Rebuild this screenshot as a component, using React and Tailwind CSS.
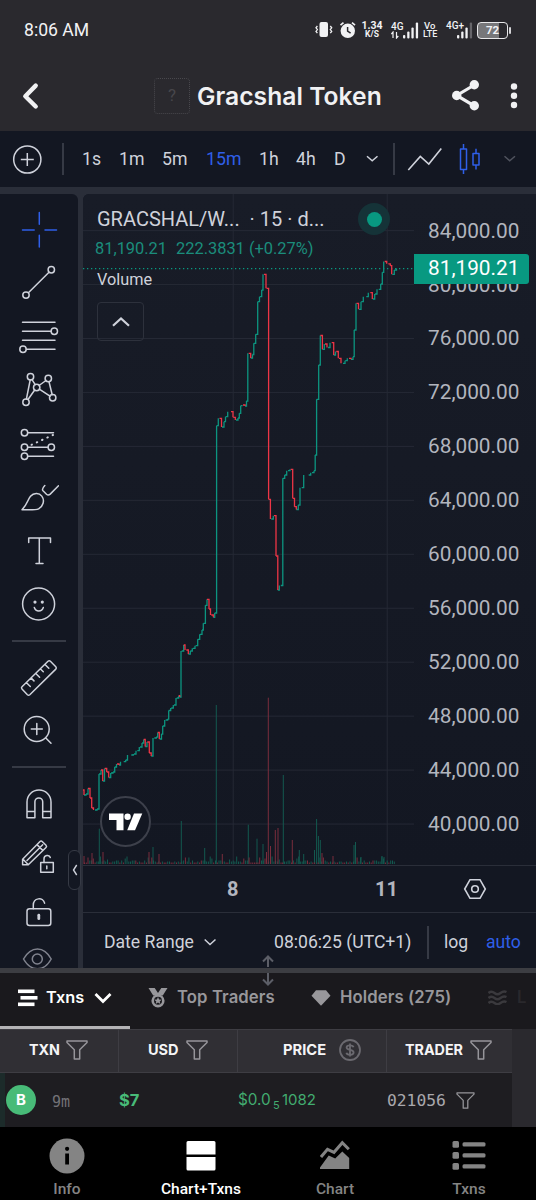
const PRICES = [
    "84,000.00",
    "80,000.00",
    "76,000.00",
    "72,000.00",
    "68,000.00",
    "64,000.00",
    "60,000.00",
    "56,000.00",
    "52,000.00",
    "48,000.00",
    "44,000.00",
    "40,000.00",
];

// x, y pairs of the price steps
const STEPS = [
    [83, 790], [84, 795], [86, 794], [88, 788.5], [90, 798], [91.7, 808], [93.5, 810], [97, 809],
    [99, 774], [101, 770], [102.7, 781], [104.5, 768.5], [106.7, 772], [108.7, 777.5], [110.7, 773],
    [113, 772], [114.7, 767], [116.5, 764], [119, 765], [120.5, 761.7], [125.7, 760], [127.5, 755],
    [133.3, 754], [136, 750.7], [139.3, 747], [142, 743], [143.7, 739.5], [145.2, 746.5], [147, 742],
    [149.3, 753], [151.2, 756], [153, 738], [156.3, 737], [157.7, 732.5], [159.3, 739], [161.5, 734],
    [162.7, 726], [164.7, 720], [167.7, 719], [168.7, 710.5], [170.7, 708], [173.3, 705], [176, 698],
    [178.7, 695.7], [179.7, 697], [181, 651], [183.7, 645], [185, 650], [188.3, 654], [190.3, 651],
    [192.3, 648.3], [195, 645.7], [197.7, 639.3], [199.7, 634.3], [202, 630], [203.3, 623.3],
    [205.4, 605.3], [207, 599.3], [209, 609], [210.5, 615], [213.3, 617.3], [214.7, 613],
    [216.6, 425.7], [218.3, 418.3], [221.5, 427], [224, 421.7], [225.5, 416.7], [227.7, 411.7],
    [233, 417.3], [235.3, 420], [238, 418], [239.3, 413.3], [240.7, 405.7], [242, 405], [245, 406],
    [246.5, 401], [247.8, 353.3], [250.7, 358], [252.5, 354.5], [253.8, 343.3], [255.7, 334.3],
    [257.7, 301.7], [259.5, 296.7], [261.7, 290], [263, 274.3], [266, 288.3], [268.6, 499.3],
    [270.4, 519], [273.3, 515.7], [276, 556], [277.8, 590], [279.3, 585.5], [282.8, 478.3],
    [284.7, 475], [286.7, 470.7], [290, 469.3], [292.7, 498.3], [294.5, 506.7], [296.3, 509.5],
    [298.3, 505], [300, 487.7], [303.7, 475], [310.7, 472.7], [314, 470.7], [315.2, 455],
    [316.6, 399.3], [318.7, 365], [320.3, 335.5], [322.4, 349.3], [324.3, 344], [327, 347.5],
    [330, 342.7], [333.7, 355], [335.5, 351.5], [338.3, 358.3], [341, 363.3], [345, 360.7],
    [347.3, 358.3], [351, 359.3], [353, 356.7], [354.2, 330], [356, 303.3], [358.5, 309.3],
    [361, 301.7], [363.3, 296.7], [368.3, 292.7], [372.3, 299], [374.7, 294], [377, 289.3],
    [380.7, 284], [382.3, 272.3], [383.7, 261.5], [386.7, 263.8], [390.3, 265.7], [391.7, 274.3],
    [394.3, 270], [396.5, 268.5],
];

// x, top, falling
const VOLUME_PEAKS = [
    [84, 856, 1], [92, 853, 1], [99.3, 828.7, 0], [103, 852, 1], [149, 852, 1], [153, 847, 0],
    [159, 854, 1], [181.3, 821, 0], [204.7, 848, 0], [216.3, 705, 0], [222.3, 854, 1],
    [248.3, 824.7, 0], [257, 838.7, 0], [263, 844, 0], [266.5, 852, 1], [268.3, 697.7, 1],
    [270.5, 846, 1], [275.3, 830, 1], [278, 828, 1], [283.3, 775, 0], [292.3, 840, 1],
    [299.3, 850, 0], [303.7, 854, 0], [314.5, 850, 0], [316.6, 819, 0], [318.4, 836, 0],
    [320.3, 840, 0], [322, 853, 1], [333, 856, 1], [354, 845, 0], [355.5, 842, 0], [361, 857, 0],
    [382, 856, 0], [384, 857, 0],
];

const GRID_Y = PRICES.map((_, i) => 230.6 + i * 53.95);

function stepPath(falling) {
    let d = "";
    for (let i = 1; i < STEPS.length; i++) {
        const [x0, y0] = STEPS[i - 1];
        const [x1, y1] = STEPS[i];
        if (y1 > y0 === falling) {
            d += `M${Math.max(x0, x1 - 2)} ${y0}H${x1}V${y1}`;
        }
    }
    return d;
}

function volumePath(falling) {
    let d = "";
    VOLUME_PEAKS.forEach(([x, top, down]) => {
        if (Boolean(down) === falling) {
            d += `M${x} 864V${top}`;
        }
    });
    for (let i = 0; i < 176; i++) {
        const seed = (i * 7919 + 31 * i * i) % 97;
        const down = seed % 3 === 0;
        if (down === falling) {
            const height = 1.5 + (seed % 11 > 6 ? seed % 7 : seed % 3);
            d += `M${(84.5 + i * 1.77).toFixed(1)} 864v${-height}`;
        }
    }
    return d;
}

function Glyph({ box, className = "", children }) {
    const [, , w, h] = box.split(" ");
    return (
        <svg
            viewBox={box}
            width={w}
            height={h}
            fill="none"
            stroke="currentColor"
            className={`shrink-0 ${className}`}
        >
            {children}
        </svg>
    );
}

function SignalBars({ faded }) {
    return (
        <svg width="16" height="17" viewBox="0 0 16 17" fill="currentColor">
            <rect x="0" y="13" width="2.3" height="3.5" rx="1" />
            <rect x="4.2" y="9.5" width="2.3" height="7" rx="1" />
            <rect x="8.4" y="5.5" width="2.3" height="11" rx="1" />
            <rect x="12.8" y="0.5" width="2.3" height="16" rx="1" opacity={faded ? 0.3 : 1} />
        </svg>
    );
}

function PhoneStatus() {
    return (
        <div className="flex h-[60px] items-center pl-6 text-[#f2f2f4]">
            <span className="w-[289px] text-[17.6px]">8:06 AM</span>
            <svg width="42" height="18" viewBox="0 0 42 18" fill="currentColor" className="ml-px">
                <rect x="5.5" y="1" width="8.5" height="15" rx="2" />
                <path
                    d="M3.4 5L2 6.8l1.4 1.8L2 10.4l1.4 1.8M16.3 5l1.4 1.8-1.4 1.8 1.4 1.8-1.4 1.8"
                    fill="none"
                    stroke="currentColor"
                    strokeWidth="1.3"
                />
                <circle cx="33.8" cy="9.8" r="7.2" />
                <path d="M26.5 4.2l3-2.6M41 4.2l-3-2.6" stroke="currentColor" strokeWidth="1.7" />
                <path d="M33.6 6v4.2l3 2" fill="none" stroke="#2a292e" strokeWidth="1.5" />
            </svg>
            <div className="ml-[6px] w-5 text-center leading-[9px] font-bold">
                <div className="-mx-1 text-[10.5px]">1.34</div>
                <div className="text-[8.5px]">K/S</div>
            </div>
            <div className="ml-[9px] w-[12px] text-[10px] leading-[9px] font-medium">
                <div>4G</div>
                <svg width="8" height="8" viewBox="0 0 8 8" fill="none" stroke="currentColor" strokeWidth="1.2">
                    <path d="M2 7V1L.3 3M5.500 1v6L7.300 5" />
                </svg>
            </div>
            <SignalBars />
            <div className="ml-[5px] w-[16px] text-[9.5px] leading-[9px] font-medium">
                <div>Vo</div>
                <div className="-ml-px text-[9px]">LTE</div>
            </div>
            <div className="ml-[6px] h-[18px] w-[11px] text-[10px] leading-[9px] font-medium whitespace-nowrap">
                4G+
            </div>
            <SignalBars faded />
            <div className="ml-[4px] flex h-[17px] w-[31px] rounded-[4px] border-[1.5px] border-[#e8e8ea] bg-linear-to-r from-[#77777a] from-72% to-[#2a292e] to-72% text-[11.5px] leading-[14px] font-bold">
                <span className="w-full text-center">72</span>
            </div>
            <div className="ml-px h-[7px] w-[2px] rounded bg-[#d5d5d8]" />
        </div>
    );
}

function Header() {
    return (
        <header className="h-[131px] bg-[#2a292e]">
            <PhoneStatus />
            <div className="flex h-[72px] items-center pl-5 text-[#f1f1f3]">
                <Glyph box="20 80 20 32">
                    <path d="M35.700 85.600L25.300 96.200l10.400 10.300" strokeWidth="4.400" strokeLinecap="round" strokeLinejoin="round" />
                </Glyph>
                <div className="ml-[114px] flex size-9 shrink-0 items-center justify-center rounded-sm border border-dotted border-[#49484d] text-[17px] text-[#47464b]">
                    ?
                </div>
                <h1 className="ml-[7px] w-[186px] shrink-0 font-[Inter] text-[24.600px] font-semibold tracking-[0.050px] whitespace-nowrap">
                    Gracshal Token
                </h1>
                <Glyph box="450 78 32 36" className="ml-[67px]">
                    <path d="M474.300 85L456.700 95.500l17.600 10.300" strokeWidth="3.200" />
                    <g fill="currentColor" strokeWidth="0">
                        <circle cx="474.300" cy="84.800" r="4.700" />
                        <circle cx="456.700" cy="95.500" r="4.700" />
                        <circle cx="474.300" cy="105.800" r="4.700" />
                    </g>
                </Glyph>
                <Glyph box="506 78 16 36" className="ml-[24px]">
                    <g fill="currentColor" strokeWidth="0">
                        <circle cx="514" cy="86.500" r="3.200" />
                        <circle cx="514" cy="95.800" r="3.200" />
                        <circle cx="514" cy="105" r="3.200" />
                    </g>
                </Glyph>
            </div>
        </header>
    );
}

const INTERVALS = [
    { label: "1s", className: "w-[37px]" },
    { label: "1m", className: "w-[43px]" },
    { label: "5m", className: "w-[44px]" },
    { label: "15m", className: "w-[53px] text-[#2f5fe8]" },
    { label: "1h", className: "w-[37px]" },
    { label: "4h", className: "w-[38px]" },
    { label: "D", className: "w-[30px]" },
];

function Toolbar() {
    return (
        <div className="flex h-14 items-center bg-[#131722] text-[17.700px] text-[#cfd2db]">
            <Glyph box="12 143.500 32 32" className="ml-3">
                <circle cx="27.300" cy="160" r="13.600" strokeWidth="1.500" />
                <path d="M20.800 160h13M27.300 153.500v13" strokeWidth="1.500" />
            </Glyph>
            <div className="ml-[18px] h-8 w-[2px] bg-[#363a45]" />
            <div className="ml-[18px] flex">
                {INTERVALS.map(({ label, className }) => (
                    <span key={label} className={`shrink-0 ${className}`}>
                        {label}
                    </span>
                ))}
            </div>
            <Glyph box="364 150 16 20">
                <path d="M367 157.300l5.200 4.500 5.300-4.500" strokeWidth="1.500" />
            </Glyph>
            <div className="ml-[13px] h-8 w-[2px] bg-[#363a45]" />
            <Glyph box="406 144 40 32" className="ml-[10px]">
                <path d="M409.300 171l12-13.500 8.500 7.500 12.500-15.500" strokeWidth="1.600" />
            </Glyph>
            <Glyph box="446 144 40 32" className="text-[#2f5fe8]">
                <path
                    d="M461.500 150h6v20.500h-6zM464.500 145v5M464.500 170.500v4.500M474 154.500h6V166h-6zM477 149.700v4.800M477 166v4.500"
                    strokeWidth="1.500"
                    strokeLinejoin="round"
                />
            </Glyph>
            <Glyph box="500 150 20 20" className="ml-[14px] text-[#50535e]">
                <path d="M505.500 157.300l5.200 4.500 5.300-4.500" strokeWidth="1.500" />
            </Glyph>
        </div>
    );
}

function Tool({ y, children }) {
    return (
        <div className="flex h-[53.500px] shrink-0 items-center justify-center">
            <Glyph box={`19 ${y - 20} 40 40`}>
                <g strokeWidth="1.500" strokeLinejoin="round" strokeLinecap="round">
                    {children}
                </g>
            </Glyph>
        </div>
    );
}

function Divider({ className }) {
    return <div className={`ml-3 h-[2px] w-[54px] shrink-0 bg-[#363a45] ${className}`} />;
}

function DrawingTools() {
    return (
        <aside className="flex w-[78px] shrink-0 flex-col overflow-hidden rounded-tr-md bg-[#131722] pt-[9px] text-[#cfd2db]">
            <Tool y={230}>
                <path d="M39.300 212.500v11.800M39.300 235.200V247M22.500 230h11.700M45 230h11.500" stroke="#2f5fe8" />
            </Tool>
            <Tool y={283.500}>
                <path d="M28.400 293.200L49 272.700" />
                <circle cx="51.300" cy="270.300" r="3.200" />
                <circle cx="26" cy="295.600" r="3.200" />
            </Tool>
            <Tool y={337}>
                <path d="M22.500 322.300H55M22.500 331.300H51M22.500 340.300H55M26.500 349.300H55" />
                <circle cx="54.300" cy="331.300" r="3.200" />
                <circle cx="23" cy="349.300" r="3.200" />
            </Tool>
            <Tool y={390.500}>
                <path d="M30.200 380.500L26.400 399.500M32 380.200l3.200 5M34.700 390.500l-6.700 9.500M39 386l7-5M49 382.200l3.200 13M39.300 389.700l10.700 7" />
                <circle cx="30.500" cy="377.300" r="3.200" />
                <circle cx="48.300" cy="379" r="3.200" />
                <circle cx="36.700" cy="388" r="3.200" />
                <circle cx="26" cy="402.700" r="3.200" />
                <circle cx="52.700" cy="398.300" r="3.200" />
            </Tool>
            <Tool y={444}>
                <path d="M28 432.700h25.500M28 447.300h20M28 456.300h25.500" />
                <path d="M31.500 444.800L53 435" strokeDasharray="0.500 5.300" strokeWidth="2" />
                <circle cx="24.500" cy="432.700" r="3.200" />
                <circle cx="24.500" cy="447.300" r="3.200" />
                <circle cx="51.300" cy="447.300" r="3.200" />
                <circle cx="24.500" cy="456.300" r="3.200" />
            </Tool>
            <Tool y={497.500}>
                <path d="M22 510.300c6-6.500 5.500-10 8.500-13.500s8.500-4 11.300-.2c3.300 4.400 1.200 10.400-3.200 12.700-3 1.500-8 1-16.600 1z" />
                <path d="M44.800 486c-2.500 2.700-3 4-1.800 5.300l3.500 3.400c1.300 1.200 2.500 1 3.700-.1l8.300-8.400" />
            </Tool>
            <Tool y={551}>
                <path d="M28.700 542.500V538h21.800v4.500M39.300 538v25.600M36 563.600h7" />
            </Tool>
            <Tool y={604.500}>
                <circle cx="38.600" cy="604.500" r="16" />
                <path d="M34.300 608c1.500 4.600 7.500 4.600 9 0" />
                <circle cx="35" cy="602.600" r="1.600" fill="currentColor" strokeWidth="0" />
                <circle cx="42.300" cy="602.600" r="1.600" fill="currentColor" strokeWidth="0" />
            </Tool>
            <Divider className="mt-[9px] mb-[9px]" />
            <Tool y={677.500}>
                <path d="M22 686.300l26-25.500c.8-.7 1.700-.7 2.400 0l5.400 5.500c.7.800.7 1.600 0 2.300l-26 25.600c-.8.700-1.600.7-2.400 0L22 688.600c-.7-.8-.7-1.600 0-2.300zM26.500 682.200l3.800 3.800M31.200 677.600l2.800 2.800M35.800 673l3.800 3.800M40.500 668.500l2.800 2.800M45 664l3.800 3.800" />
            </Tool>
            <Tool y={731}>
                <circle cx="36.700" cy="729" r="12.500" />
                <path d="M31.300 729h11M36.800 723.500v11M45.800 738l5.200 5.300" />
            </Tool>
            <Divider className="mt-[8px] mb-[9px]" />
            <Tool y={803.500}>
                <path d="M27 817.300V801.500a12 12 0 0 1 24 0v15.800h-8.300v-16a3.900 3.900 0 0 0-7.800 0v16zM27 811h7.900M42.700 811H51" />
            </Tool>
            <Tool y={857}>
                <path d="M22.600 864.700v-5.500L40 841.500c.7-.7 1.500-.7 2.200 0l3.800 3.800c.7.700.7 1.500 0 2.200L28.300 864.700zM22.800 859l5.300 5.500M27 860.500l15.700-15.700M37 844.600l5.700 5.800" />
                <path d="M40.700 862.500h12.600v9.700H40.700z" fill="#131722" />
                <path d="M44 862.500v-3.700c0-4 5.500-4.500 6.300-1.300M46.800 866v2.700" />
            </Tool>
            <Tool y={911}>
                <rect x="27" y="908.700" width="23.800" height="16.800" rx="2.500" />
                <path d="M33.300 908.700v-3.500c0-7.600 9.800-8.600 11.300-2" />
                <path d="M38.800 915.200v3.500" strokeWidth="2.800" />
            </Tool>
            <Glyph box="19 944 40 24" className="mt-[6px] ml-[19px] text-[#80838e]">
                <path d="M23.500 959C31 945.500 44 945.500 51.200 959 44 972 31 972 23.500 959z" strokeWidth="1.500" />
                <circle cx="37.300" cy="959" r="5" strokeWidth="1.500" />
            </Glyph>
        </aside>
    );
}

function PriceChart() {
    return (
        <svg width="331" height="671" viewBox="83 194 331 671" fill="none" className="block">
            <g stroke="#252935">
                {GRID_Y.map((y) => (
                    <path key={y} d={`M83 ${y}H414`} />
                ))}
                <path d="M233.200 194V865M387.200 194V865" />
            </g>
            <path d={volumePath(false)} stroke="#13594f" strokeWidth="1" />
            <path d={volumePath(true)} stroke="#7a2d3d" strokeWidth="1" />
            <path d="M83 268.700H414" stroke="#089981" strokeWidth="1.300" strokeDasharray="1.300 2.700" />
            <path d={stepPath(false)} stroke="#0c9580" strokeWidth="1.300" />
            <path d={stepPath(true)} stroke="#ee3546" strokeWidth="1.300" />
        </svg>
    );
}

function Legend() {
    return (
        <div className="absolute top-0 left-0 w-[331px] pt-3 pl-[14px] text-[#cfd2db]">
            <div className="flex h-[26px] items-center text-[20px] whitespace-nowrap">
                <span className="w-[232px]">GRACSHAL/W... &nbsp;· 15 · d...</span>
                <span className="ml-[29px] flex size-8 items-center justify-center rounded-full bg-[#153338]">
                    <span className="size-[15px] rounded-full bg-[#089981]" />
                </span>
            </div>
            <div className="mt-[7px] -ml-[2px] flex h-5 items-center gap-[9px] text-[16.400px] whitespace-nowrap text-[#1b8d7c]">
                <span>81,190.21</span>
                <span>222.3831 (+0.27%)</span>
            </div>
            <div className="mt-[11px] text-[16.300px] leading-5">Volume</div>
            <div className="mt-[12px] flex h-[39px] w-[47px] items-center justify-center rounded-[4px] border-[1.500px] border-[#2d313c]">
                <Glyph box="0 0 20 12">
                    <path d="M2 9.700l8-7.200 8 7.200" strokeWidth="2.200" />
                </Glyph>
            </div>
        </div>
    );
}

function PriceAxis() {
    return (
        <div className="relative flex-1 overflow-hidden pt-[9.600px] text-[20.800px] text-[#b2b5be]">
            {PRICES.map((price) => (
                <div key={price} className="h-[53.950px] pl-[14px] leading-[54px]">
                    {price}
                </div>
            ))}
            <div className="absolute top-[60px] left-0 h-[30px] w-[115px] rounded-r-[3px] bg-[#089981] pl-[14px] leading-[29px] text-white">
                81,190.21
            </div>
        </div>
    );
}

function TradingViewBadge() {
    return (
        <div className="absolute top-[602px] left-[17px] flex size-[51px] items-center justify-center rounded-full border-2 border-[#3d404b] bg-[#131722]">
            <svg width="34" height="18" viewBox="0 0 34 18" fill="#fff">
                <path d="M0 .5h14.500v16.800H7.500V7H0z" />
                <circle cx="18.600" cy="3.700" r="3.200" />
                <path d="M25 .5h8.300l-7.300 16.800h-7.800z" />
            </svg>
        </div>
    );
}

function ChartPanel() {
    return (
        <section className="flex w-[453px] flex-col overflow-hidden rounded-tl-md bg-[#131722]">
            <div className="relative flex h-[671px] bg-linear-to-b from-[#181c27] to-[#131722]">
                <PriceChart />
                <PriceAxis />
                <Legend />
                <TradingViewBadge />
            </div>
            <div className="flex h-[48px] shrink-0 items-center border-y border-[#2a2e39] text-[20px] font-bold text-[#b2b5be]">
                <span className="ml-[144px] w-[148px]">8</span>
                <span className="w-[87px]">11</span>
                <Glyph box="0 0 24 22" className="ml-px text-[#cfd2db]">
                    <path d="M1.700 11L7 1.700h10L22.300 11 17 20.300H7z" strokeWidth="1.600" />
                    <circle cx="12" cy="11" r="3.300" strokeWidth="1.600" />
                </Glyph>
            </div>
            <div className="flex h-[55px] shrink-0 items-center pt-[3px] pl-[21px] text-[17.600px] whitespace-nowrap text-[#cfd2db]">
                <span className="w-[98px]">Date Range</span>
                <Glyph box="0 0 16 10">
                    <path d="M2.700 2.500L8 7.500l5.500-5" strokeWidth="1.500" />
                </Glyph>
                <span className="ml-[56px] w-[153px]">08:06:25 (UTC+1)</span>
                <div className="h-[33px] w-[2px] bg-[#363a45]" />
                <span className="ml-[15px] w-[42px]">log</span>
                <span className="text-[#2f5fe8]">auto</span>
            </div>
        </section>
    );
}

function Workspace() {
    return (
        <main className="relative flex h-[781px] justify-between bg-[#2a2e39] pt-[7px]">
            <DrawingTools />
            <ChartPanel />
            <div className="absolute top-[663px] left-[68px] flex h-10 w-[13px] items-center justify-center rounded-md border border-[#363a45] bg-[#131722] text-[#cfd2db]">
                <Glyph box="0 0 6 12">
                    <path d="M4.700 1L1.500 6l3.200 5" strokeWidth="1.400" />
                </Glyph>
            </div>
        </main>
    );
}

function Splitter() {
    return (
        <div className="relative h-[5px] bg-[#3c3d42]">
            <svg
                width="14"
                height="32"
                viewBox="0 0 14 32"
                fill="none"
                stroke="#5c5e67"
                strokeWidth="2"
                className="absolute -top-[13px] left-[261px]"
            >
                <path d="M7 12V1.500M2 6.500l5-5 5 5M7 18v11.500M2 24.500l5 5 5-5" />
            </svg>
        </div>
    );
}

function Funnel({ small }) {
    return (
        <svg
            width={small ? 19 : 22}
            height={small ? 17 : 20}
            viewBox="0 0 22 20"
            fill="none"
            stroke="#96959a"
            strokeWidth="1.500"
            strokeLinejoin="round"
            className="shrink-0"
        >
            <path d="M1 1h20v1.500L13.700 9.800V19H8.300V9.800L1 2.500z" />
        </svg>
    );
}

function Tabs() {
    return (
        <div className="flex h-14 items-stretch overflow-hidden bg-[#1a191d] font-[Inter] text-[16.700px] font-semibold whitespace-nowrap text-[#98979b]">
            <div className="flex w-[130px] shrink-0 items-center border-b-[3px] border-[#b4b3b6] pb-1 pl-[17px] text-white">
                <svg width="21" height="18" viewBox="0 0 21 18" fill="currentColor">
                    <rect x="1" y="0.500" width="16.500" height="3.600" />
                    <rect x="3.500" y="7" width="17" height="3.600" />
                    <rect x="1" y="13.500" width="16.500" height="3.600" />
                </svg>
                <span className="ml-2 w-[48px] text-[16.300px]">Txns</span>
                <svg width="18" height="12" viewBox="0 0 18 12" fill="none" stroke="currentColor" strokeWidth="2.800">
                    <path d="M1.500 2L9 9.500 16.500 2" />
                </svg>
            </div>
            <div className="flex items-center pb-[7px] pl-[18px]">
                <svg width="20" height="20" viewBox="0 0 20 20" fill="currentColor">
                    <path d="M.5 0h6.200L10 5 13.300 0h6.200l-4.700 7.500H5.200z" />
                    <circle cx="10" cy="12.800" r="5.300" fill="#1a191d" stroke="currentColor" strokeWidth="2.600" />
                    <path d="M10 9l1.100 2.500 2.600.2-2 1.700.7 2.600-2.400-1.400L7.600 16l.7-2.600-2-1.700 2.600-.2z" />
                </svg>
                <span className="ml-[9px] w-[101px] tracking-[0.100px]">Top Traders</span>
            </div>
            <div className="flex items-center pb-[7px] pl-[33px]">
                <svg width="20" height="16" viewBox="0 0 20 16" fill="currentColor">
                    <path d="M5 .3h10l4.500 5.500L10 15.700.5 5.800z" />
                </svg>
                <span className="ml-[9px] w-[113px] tracking-[0.100px]">Holders (275)</span>
            </div>
            <div className="flex items-center pb-[7px] pl-[35px] text-[#3a393d]">
                <svg width="20" height="15" viewBox="0 0 20 15" fill="none" stroke="currentColor" strokeWidth="2.400">
                    <path d="M.5 3q3-2.500 6 0t6 0 6-1M.5 8q3-2.500 6 0t6 0 6-1M.5 13q3-2.500 6 0t6 0 6-1" />
                </svg>
                <span className="ml-[9px] text-[#29282c]">L</span>
            </div>
        </div>
    );
}

function TradesTable() {
    return (
        <div className="w-[512px]">
            <div className="flex h-[44px] border-t border-b border-[#3e3d43] bg-[#302f34] font-[Inter] text-[15px] font-bold text-[#f5f5f6]">
                <div className="flex w-[119px] items-center border-r border-[#3e3d43] pb-[2px] pl-[29px]">
                    <span className="w-[37px] text-[14.300px]">TXN</span>
                    <Funnel />
                </div>
                <div className="flex w-[119px] items-center border-r border-[#3e3d43] pb-[2px] pl-[29px]">
                    <span className="w-[38px] text-[14.500px]">USD</span>
                    <Funnel />
                </div>
                <div className="flex w-[149px] items-center border-r border-[#3e3d43] pb-[2px] pl-[45px]">
                    <span className="w-[56px] text-[14.700px]">PRICE</span>
                    <svg width="22" height="22" viewBox="0 0 22 22" fill="none" stroke="#6b6a70" strokeWidth="1.800">
                        <circle cx="11" cy="11" r="10" />
                        <path d="M14.500 8.200C14 5.700 7.600 5.600 7.600 8.500c0 3.300 7 1.600 7 5 0 3-6.500 3-7.200.3M11 4.500v13" />
                    </svg>
                </div>
                <div className="flex w-[125px] items-center pb-[2px] pl-[18px]">
                    <span className="w-[65px] text-[14.300px]">TRADER</span>
                    <Funnel />
                </div>
            </div>
            <div className="flex h-[54px] items-center border-l-[5px] border-[#1c2b2a] bg-[#1e1d21]">
                <div className="ml-px flex size-[30px] items-center justify-center rounded-full bg-[#48bb78] font-[Inter] text-[15px] font-bold text-white">
                    B
                </div>
                <span className="ml-4 w-[67px] translate-y-[2px] font-['DejaVu_Sans_Mono'] text-[15px] text-[#737277]">
                    9m
                </span>
                <span className="w-[119px] font-[Inter] text-[16.500px] font-bold text-[#48bb78]">$7</span>
                <span className="flex w-[149px] items-baseline font-[Inter] text-[15.300px] text-[#42ac70]">
                    <span className="w-[35px]">$0.0</span>
                    <span className="w-[9px] translate-y-1 text-[11px]">5</span>
                    <span className="text-[15px]">1082</span>
                </span>
                <span className="w-[69px] translate-y-px font-['DejaVu_Sans_Mono'] text-[16.300px] text-[#a9a8ad]">
                    021056
                </span>
                <Funnel small />
            </div>
        </div>
    );
}

const NAV_ITEMS = [
    {
        label: "Info",
        icon: (
            <svg width="36" height="36" viewBox="0 0 36 36" fill="currentColor">
                <circle cx="18" cy="18" r="17.500" />
                <path d="M16.200 15.500h3.800v11h-3.800z" fill="#000" />
                <circle cx="18.100" cy="10.800" r="2.100" fill="#000" />
            </svg>
        ),
    },
    {
        label: "Chart+Txns",
        active: true,
        icon: (
            <svg width="30" height="36" viewBox="0 0 30 36" fill="currentColor">
                <path d="M2 3h26q1.500 0 1.500 1.500v12H.5v-12Q.5 3 2 3zM.5 19h29v12q0 1.500-1.500 1.500H2Q.5 32.500.5 31z" />
            </svg>
        ),
    },
    {
        label: "Chart",
        icon: (
            <svg width="30" height="36" viewBox="0 0 30 36" fill="currentColor">
                <path d="M0 31v-1.500l8.700-12 6.500 3L22.300 13.500l6.900 6.500v11z" />
                <path d="M1 19L7.500 11.300l6.500 3 8.300-9.500 6.500 6.500" fill="none" stroke="currentColor" strokeWidth="3" />
            </svg>
        ),
    },
    {
        label: "Txns",
        icon: (
            <svg width="34" height="36" viewBox="0 0 34 36" fill="currentColor">
                {[3, 14, 25].map((y) => (
                    <g key={y}>
                        <rect x="0.500" y={y} width="6.500" height="6.800" rx="1.500" />
                        <rect x="10.500" y={y + 1.300} width="23" height="4.300" rx="1.500" />
                    </g>
                ))}
            </svg>
        ),
    },
];

function BottomNav() {
    return (
        <nav className="grid h-[73px] grid-cols-4 bg-black">
            {NAV_ITEMS.map(({ label, icon, active }) => (
                <div
                    key={label}
                    className={`flex flex-col items-center pt-[11px] text-[15.500px] leading-5 font-medium ${active ? "text-white" : "text-[#848484]"}`}
                >
                    {icon}
                    <span className="mt-[5px]">{label}</span>
                </div>
            ))}
        </nav>
    );
}

export default function App() {
    return (
        <div className="flex h-[1200px] w-[536px] flex-col overflow-hidden bg-[#2a292e] font-[Roboto]">
            <Header />
            <Toolbar />
            <Workspace />
            <Splitter />
            <Tabs />
            <TradesTable />
            <BottomNav />
        </div>
    );
}
